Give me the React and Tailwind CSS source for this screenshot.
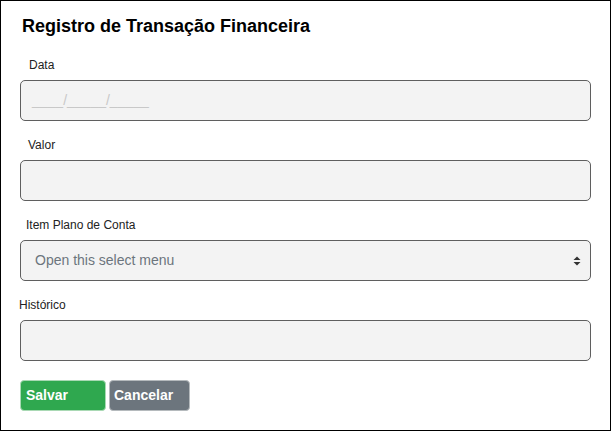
import React from 'react';

// Formulário de registro de transação
const fieldClass =
  'block h-[41px] w-full rounded-[5px] border border-[#5f5f5f] bg-[#f3f3f3] px-[11px] text-[14px] text-[#333] outline-none';

const App = () => {
  return (
    <div className="h-[431px] w-[611px] border border-black bg-white font-['Liberation_Sans',Arial,sans-serif]">
      <div className="px-[19px]">
        <h1 className="ml-[2px] pt-[14px] text-[18px] font-bold leading-[22px] text-black">
          Registro de Transação Financeira
        </h1>

        <div className="mt-[20px]">
          <label className="ml-[9px] block text-[12px] leading-[16px] text-[#222]">Data</label>
          <div className={`${fieldClass} mt-[7px] flex items-center`}>
            <span className="text-[14px] text-[#c8c8c8]">____/_____/_____</span>
          </div>
        </div>

        <div className="mt-[16px]">
          <label className="ml-[8px] block text-[12px] leading-[16px] text-[#222]">Valor</label>
          <input className={`${fieldClass} mt-[7px]`} />
        </div>

        <div className="mt-[16px]">
          <label className="ml-[6px] block text-[12px] leading-[16px] text-[#222]">Item Plano de Conta</label>
          <div className={`${fieldClass} mt-[7px] flex items-center justify-between pl-[14px] pr-[9px]`}>
            <span className="text-[14px] text-[#6c757d]">Open this select menu</span>
            <svg width="8" height="10" viewBox="0 0 8 10">
              <path d="M4 0.5L7.5 4H0.5Z" fill="#333" />
              <path d="M4 9.5L7.5 6H0.5Z" fill="#333" />
            </svg>
          </div>
        </div>

        <div className="mt-[16px]">
          <label className="-ml-[1px] block text-[12px] leading-[16px] text-[#222]">Histórico</label>
          <input className={`${fieldClass} mt-[7px]`} />
        </div>

        <div className="mt-[19px] flex gap-[3px]">
          <button className="h-[31px] w-[86px] rounded-[4px] border border-[#a9d9b4] bg-[#2fa84f] pl-[5px] text-left text-[14px] font-bold text-white">
            Salvar
          </button>
          <button className="h-[31px] w-[81px] rounded-[4px] border border-[#b5babd] bg-[#6c757d] pl-[4px] text-left text-[14px] font-bold text-white">
            Cancelar
          </button>
        </div>
      </div>
    </div>
  );
};

export default App;
